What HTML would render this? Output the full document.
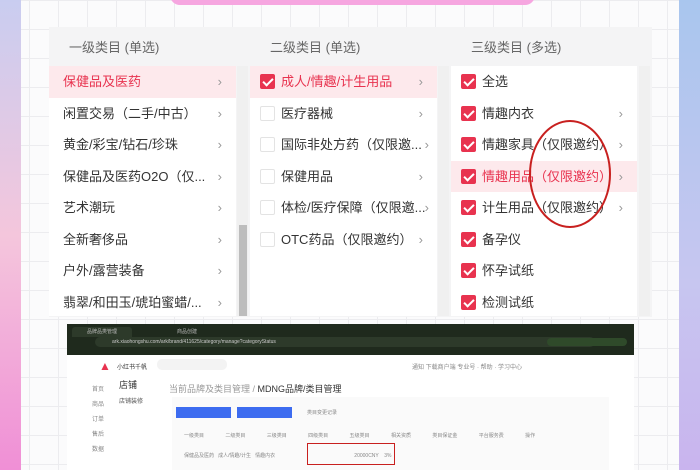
<!DOCTYPE html>
<html><head><meta charset="utf-8"><style>
*{margin:0;padding:0;box-sizing:border-box}
body{width:700px;height:470px;overflow:hidden;position:relative;font-family:"Liberation Sans","Noto Sans CJK SC",sans-serif;
background-color:#fbfbfc;background-image:linear-gradient(#ececef 1px,transparent 1px),linear-gradient(90deg,#ececef 1px,transparent 1px);background-size:29px 29px}
.l{position:absolute;left:0;top:0;width:21px;height:470px;background:linear-gradient(#c9cdf0,#f4c6dc 50%,#f08fd6)}
.r{position:absolute;right:0;top:0;width:21px;height:470px;background:linear-gradient(#a9c6ee,#c7c6f0 60%,#c9b4ee)}
.ban{position:absolute;left:170px;top:-10px;width:365px;height:15px;border-radius:0 0 10px 10px;background:#f6a6e0}
.panel{position:absolute;left:49px;top:27px;width:603px;height:290px;background:#f4f4f5}
.h{position:absolute;top:10px;font-size:13px;color:#666}
.col{position:absolute;top:39px;background:#fff;height:250px;width:187px}
.row{height:31.5px;line-height:31.5px;font-size:13px;color:#333;position:relative;padding-left:14px;white-space:nowrap}
.row.s{background:#fde9ec;color:#e8334f}
.row .ar{position:absolute;right:14px;top:0;color:#999;font-size:13px}
.cb{display:inline-block;width:15px;height:15px;border-radius:2px;vertical-align:-3px;margin-right:6px;border:1px solid #e3e3e3;background:#fff;position:relative}
.cb.on{background:#e8334f;border-color:#e8334f}
.cb.on:after{content:"";position:absolute;left:4px;top:1px;width:4px;height:8px;border:solid #fff;border-width:0 2px 2px 0;transform:rotate(45deg)}
.sb{position:absolute;top:39px;width:11px;height:250px;background:#f0f0f0}
.br{position:absolute;left:67px;top:324px;width:567px;height:146px;background:#fff}
.tb{height:31px;background:#1f2a1d;position:relative;font-size:5px;color:#ccc}
.t{position:absolute;font-size:6px;color:#888;white-space:nowrap}
</style></head><body>
<div class="l"></div><div class="r"></div><div class="ban"></div>
<div class="panel">
<div class="h" style="left:20px">一级类目 (单选)</div>
<div class="h" style="left:221px">二级类目 (单选)</div>
<div class="h" style="left:422px">三级类目 (多选)</div>
<div class="col" style="left:0">
<div class="row s">保健品及医药<span class="ar">›</span></div>
<div class="row">闲置交易（二手/中古）<span class="ar">›</span></div>
<div class="row">黄金/彩宝/钻石/珍珠<span class="ar">›</span></div>
<div class="row">保健品及医药O2O（仅...<span class="ar">›</span></div>
<div class="row">艺术潮玩<span class="ar">›</span></div>
<div class="row">全新奢侈品<span class="ar">›</span></div>
<div class="row">户外/露营装备<span class="ar">›</span></div>
<div class="row">翡翠/和田玉/琥珀蜜蜡/...<span class="ar">›</span></div>
</div>
<div class="sb" style="left:188px"><div style="position:absolute;top:159px;left:2px;width:8px;height:91px;background:#bdbdbd"></div></div>
<div class="col" style="left:201px">
<div class="row s" style="padding-left:10px"><span class="cb on"></span>成人/情趣/计生用品<span class="ar">›</span></div>
<div class="row" style="padding-left:10px"><span class="cb"></span>医疗器械<span class="ar">›</span></div>
<div class="row" style="padding-left:10px"><span class="cb"></span>国际非处方药（仅限邀...<span class="ar" style="right:8px">›</span></div>
<div class="row" style="padding-left:10px"><span class="cb"></span>保健用品<span class="ar">›</span></div>
<div class="row" style="padding-left:10px"><span class="cb"></span>体检/医疗保障（仅限邀...<span class="ar" style="right:8px">›</span></div>
<div class="row" style="padding-left:10px"><span class="cb"></span>OTC药品（仅限邀约）<span class="ar">›</span></div>
</div>
<div class="sb" style="left:389px"></div>
<div class="col" style="left:402px;width:186px">
<div class="row" style="padding-left:10px"><span class="cb on"></span>全选</div>
<div class="row" style="padding-left:10px"><span class="cb on"></span>情趣内衣<span class="ar">›</span></div>
<div class="row" style="padding-left:10px"><span class="cb on"></span>情趣家具（仅限邀约）<span class="ar">›</span></div>
<div class="row s" style="padding-left:10px"><span class="cb on"></span>情趣用品（仅限邀约）<span class="ar">›</span></div>
<div class="row" style="padding-left:10px"><span class="cb on"></span>计生用品（仅限邀约）<span class="ar">›</span></div>
<div class="row" style="padding-left:10px"><span class="cb on"></span>备孕仪</div>
<div class="row" style="padding-left:10px"><span class="cb on"></span>怀孕试纸</div>
<div class="row" style="padding-left:10px"><span class="cb on"></span>检测试纸</div>
</div>
<div class="sb" style="left:590px"></div>
</div>
<svg style="position:absolute;left:0;top:0" width="700" height="320"><ellipse cx="570" cy="174" rx="40" ry="53" fill="none" stroke="#c8201f" stroke-width="2"/></svg>
<div class="br">
<div class="tb">
<div style="position:absolute;left:5px;top:3px;width:60px;height:10px;background:#2d3a2a;border-radius:3px 3px 0 0"></div>
<div class="t" style="left:20px;top:4px;color:#bbb;font-size:5px">品牌品类管理</div>
<div class="t" style="left:110px;top:4px;color:#bbb;font-size:5px">商品创建</div>
<div style="position:absolute;left:28px;top:13px;width:500px;height:10px;background:#2d3a2a;border-radius:5px"></div>
<div class="t" style="left:45px;top:15px;color:#ccc;font-size:5px">ark.xiaohongshu.com/ark/brand/411625/category/manage?categoryStatus</div>
<div style="position:absolute;left:480px;top:14px;width:80px;height:8px;background:#2f4a2a;border-radius:4px"></div>
</div>
<div style="position:absolute;left:32px;top:35px;color:#e8334f;font-size:12px">▲</div>
<div class="t" style="left:50px;top:38px;color:#333;font-size:6px">小红书千帆</div>
<div style="position:absolute;left:90px;top:35px;width:70px;height:11px;background:#f3f3f3;border-radius:5px"></div>
<div class="t" style="left:345px;top:38px">通知 下载商户端 专业号 · 帮助 · 学习中心</div>
<div class="t" style="left:25px;top:60px">首页<br><br>商品<br><br>订单<br><br>售后<br><br>数据</div>
<div class="t" style="left:52px;top:54px;color:#333;font-size:9px">店铺</div>
<div class="t" style="left:52px;top:72px;color:#555">店铺装修</div>
<div class="t" style="left:102px;top:58px;color:#999;font-size:9px">当前品牌及类目管理 / <span style="color:#333">MDNG品牌/类目管理</span></div>
<div style="position:absolute;left:105px;top:73px;width:437px;height:73px;background:#fafafa"></div>
<div style="position:absolute;left:109px;top:83px;width:55px;height:11px;background:#3d6cf0"></div>
<div style="position:absolute;left:170px;top:83px;width:55px;height:11px;background:#3d6cf0"></div>
<div class="t" style="left:240px;top:85px;font-size:5px">类目变更记录</div>
<div class="t" style="left:117px;top:108px;font-size:5px;word-spacing:20px">一级类目 二级类目 三级类目 四级类目 五级类目 相关资质 类目保证金 平台服务费 操作</div>
<div class="t" style="left:117px;top:128px;font-size:5px">保健品及医药 &nbsp; 成人/情趣/计生 &nbsp; 情趣内衣 &nbsp;&nbsp;&nbsp;&nbsp;&nbsp;&nbsp;&nbsp;&nbsp;&nbsp;&nbsp;&nbsp;&nbsp;&nbsp;&nbsp;&nbsp;&nbsp;&nbsp;&nbsp;&nbsp;&nbsp;&nbsp;&nbsp;&nbsp;&nbsp;&nbsp;&nbsp;&nbsp;&nbsp;&nbsp;&nbsp;&nbsp;&nbsp;&nbsp;&nbsp;&nbsp;&nbsp;&nbsp;&nbsp;&nbsp;&nbsp;&nbsp;&nbsp;&nbsp;&nbsp;&nbsp;&nbsp;&nbsp;&nbsp;&nbsp;&nbsp;&nbsp;&nbsp;&nbsp;&nbsp;&nbsp; 20000CNY &nbsp;&nbsp; 3%</div>
<div style="position:absolute;left:240px;top:119px;width:88px;height:22px;border:1.5px solid #c8201f"></div>
</div>
</body></html>
